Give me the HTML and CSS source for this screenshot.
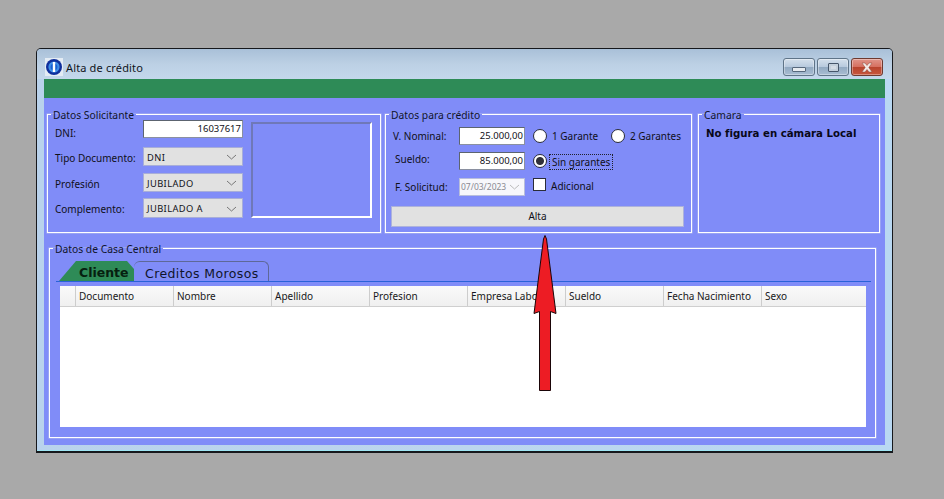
FILE: index.html
```html
<!DOCTYPE html>
<html lang="es">
<head>
<meta charset="utf-8">
<title>Alta de crédito</title>
<link rel="stylesheet" href="styles.css">
</head>
<body>
<div class="window">
  <div class="titlebar">
    <svg class="app-icon" width="18" height="18" viewBox="0 0 18 18">
      <rect width="18" height="18" fill="#e4ecf4"/>
      <circle cx="9" cy="9" r="8" fill="#0f2f9c"/>
      <circle cx="9" cy="9" r="5.6" fill="#3f8fe8"/>
      <path d="M9 4v10" stroke="#fff" stroke-width="2.4"/>
      <path d="M5.5 9a3.5 3.5 0 0 1 2-3.2v6.4a3.5 3.5 0 0 1-2-3.2zM12.5 9a3.5 3.5 0 0 0-2-3.2v6.4a3.5 3.5 0 0 0 2-3.2z" fill="#1b5fd0"/>
    </svg>
    <span class="title-text">Alta de crédito</span>
    <div class="win-buttons">
      <div class="win-btn"><span class="glyph-min"></span></div>
      <div class="win-btn"><span class="glyph-max"></span></div>
      <div class="win-btn win-close">
        <svg width="16" height="11" viewBox="0 0 16 11"><path d="M3 1h3l2 2.500L10 1h3L9.800 5.500 13 10h-3L8 7.500 6 10H3l3.200-4.500z" fill="#f4e9e6" stroke="#8a4a3c" stroke-width=".5"/></svg>
      </div>
    </div>
  </div>
  <div class="client">
    <div class="green-bar"></div>
    <div class="top-row">
      <fieldset class="group group-solicitante">
        <legend>Datos Solicitante</legend>
        <div class="solicitante-grid">
          <div class="label label-low">DNI:</div>
          <div class="field field-number">16037617</div>
          <div class="photo-box"></div>
          <div class="label">Tipo Documento:</div>
          <div class="combo"><span>DNI</span><svg class="chev" width="11" height="6" viewBox="0 0 11 6"><path d="M1 1l4.500 4L10 1" fill="none" stroke="#777" stroke-width="1"/></svg></div>
          <div class="label">Profesión</div>
          <div class="combo"><span>JUBILADO</span><svg class="chev" width="11" height="6" viewBox="0 0 11 6"><path d="M1 1l4.500 4L10 1" fill="none" stroke="#777" stroke-width="1"/></svg></div>
          <div class="label">Complemento:</div>
          <div class="combo combo-tall"><span>JUBILADO A</span><svg class="chev" width="11" height="6" viewBox="0 0 11 6"><path d="M1 1l4.500 4L10 1" fill="none" stroke="#777" stroke-width="1"/></svg></div>
        </div>
      </fieldset>
      <fieldset class="group group-credito">
        <legend>Datos para crédito</legend>
        <div class="credito-body">
          <div class="credito-grid">
            <div class="label label-mid">V. Nominal:</div>
            <div class="field field-number">25.000,00</div>
            <div class="options">
              <span class="radio"></span><span class="opt-text opt-one">1 Garante</span>
              <span class="radio"></span><span class="opt-text">2 Garantes</span>
            </div>
            <div class="label label-up label-in">Sueldo:</div>
            <div class="field field-number">85.000,00</div>
            <div class="options">
              <span class="radio radio-on"></span><span class="opt-text opt-focus">Sin garantes</span>
            </div>
            <div class="label label-mid label-in">F. Solicitud:</div>
            <div class="field field-date"><span>07/03/2023</span><svg class="chev" width="11" height="6" viewBox="0 0 11 6"><path d="M1 1l4.500 4L10 1" fill="none" stroke="#bbb" stroke-width="1"/></svg></div>
            <div class="options options-check">
              <span class="check"></span><span class="opt-text">Adicional</span>
            </div>
          </div>
          <div class="alta-btn">Alta</div>
        </div>
      </fieldset>
      <fieldset class="group group-camara">
        <legend>Camara</legend>
        <div class="camara-text">No figura en cámara Local</div>
      </fieldset>
    </div>
    <fieldset class="group group-central">
      <legend>Datos de Casa Central</legend>
      <div class="tabs">
        <div class="tab tab-active">Cliente</div>
        <div class="tab tab-other">Creditos Morosos</div>
      </div>
      <div class="table">
        <div class="thead">
          <div class="th th-first"></div>
          <div class="th">Documento</div>
          <div class="th">Nombre</div>
          <div class="th">Apellido</div>
          <div class="th">Profesion</div>
          <div class="th">Empresa Laboral</div>
          <div class="th">Sueldo</div>
          <div class="th">Fecha Nacimiento</div>
          <div class="th th-last">Sexo</div>
        </div>
      </div>
    </fieldset>
  </div>
  <svg class="arrow" width="26" height="158" viewBox="0 0 26 158">
    <path d="M13 .5L14.500 4 24 78.500 18.500 76.500V155.500H7.500V76.500L2 78.500 11.500 4z" fill="#ed1c24" stroke="#1a0508" stroke-width="1"/>
  </svg>
</div>
</body>
</html>
```

FILE: styles.css
```css
* { box-sizing: border-box; }
html, body { margin: 0; padding: 0; }
body {
  width: 944px;
  height: 499px;
  overflow: hidden;
  background: #a9a9a9;
  font-family: "Noto Sans", sans-serif;
  font-size: 10px;
  color: #101018;
}
.window {
  position: relative;
  width: 857px;
  height: 405px;
  margin: 48px 0 0 36px;
  border: 1px solid #16181c;
  border-bottom: 2px solid #16181c;
  border-radius: 5px 5px 0 0;
  background: linear-gradient(90deg, #b9d2ec 0, #bcd5ee 50%, #b9d8f2 100%);
  box-shadow: inset 0 -1px 0 #9fe6f4;
  padding: 0 7px 6px;
  display: flex;
  flex-direction: column;
}
.titlebar {
  height: 30px;
  flex: none;
  margin: 0 -7px;
  padding: 6px 9px 0 8px;
  display: flex;
  align-items: center;
  background: linear-gradient(180deg, #a9c0d8 0, #bcd0e4 50%, #c4d8ec 100%);
  border-radius: 4px 4px 0 0;
}
.app-icon { flex: none; }
.title-text { margin: 0 0 0 3px; font-size: 11px; letter-spacing: .15px; color: #10151c; }
.win-buttons { margin-left: auto; display: flex; gap: 2px; }
.win-btn {
  width: 32px;
  height: 18px;
  border: 1px solid #5f7488;
  border-radius: 3px;
  background: linear-gradient(180deg, #d4e0ec 0, #b8cade 48%, #92aac2 52%, #a8bdd2 100%);
  display: flex;
  align-items: center;
  justify-content: center;
  box-shadow: inset 0 0 0 1px rgba(255,255,255,.35);
}
.glyph-min { width: 14px; height: 5px; margin-top: 4px; background: #e6ebf0; border: 1px solid #56687c; border-radius: 1px; }
.glyph-max { width: 11px; height: 9px; border: 1px solid #46566a; border-radius: 1px; background: #d5dde6; box-shadow: inset 0 0 0 2px #c4d0dc; }
.win-close {
  border-color: #6e3a30;
  background: linear-gradient(180deg, #e0958a 0, #d67060 48%, #b8442e 52%, #c8563c 100%);
}
.client {
  flex: 1;
  background: #808cf8;
  display: flex;
  flex-direction: column;
}
.green-bar { height: 19px; flex: none; background: #2e8b57; }
.group {
  margin: 0;
  padding: 0;
  min-width: 0;
  border: 1px solid #fff;
  box-shadow: 0 0 0 .5px rgba(200,205,235,.7);
}
.group legend {
  margin-left: 3px;
  padding: 2px 2px 0;
  line-height: 12px;
  font-size: 10.300px;
  color: #10142c;
}
.top-row {
  flex: none;
  display: flex;
  margin: 9px 0 0 3px;
}
.group-solicitante { width: 334px; height: 126px; }
.group-credito { width: 307px; height: 126px; margin-left: 4px; }
.group-camara { width: 182px; height: 126px; margin-left: 6px; }
.solicitante-grid {
  display: grid;
  grid-template-columns: 88px 100px 120px;
  grid-template-rows: 27px 26px 25px 20px;
  margin-top: -1px;
  padding-left: 7px;
}
.photo-box {
  width: 121px;
  height: 96px;
  grid-column: 3;
  grid-row: 1 / span 4;
  margin: 2px 0 0 8px;
  border: 2px solid;
  border-color: #6f78b8 #fff #fff #6f78b8;
}
.label { padding-top: 4px; line-height: 14px; white-space: nowrap; }
.label-low { padding-top: 6px; }
.label-mid { padding-top: 2px; }
.label-up { padding-top: 0; }
.label-in { padding-left: 2px; }
.field {
  background: #fff;
  border: 1px solid #5c6470;
  border-right-color: #8a90a0;
  border-bottom-color: #8a90a0;
  height: 18px;
  line-height: 16px;
  padding: 0 1px;
  font-size: 9.500px;
}
.field-number { text-align: right; }
.combo {
  height: 19px;
  background: #e1e1e1;
  border: 1px solid #a8aed8;
  display: flex;
  align-items: center;
  justify-content: space-between;
  padding: 1px 5px 0 3px;
  font-size: 9.300px;
  letter-spacing: .4px;
}
.combo-tall { height: 20px; }
.chev { flex: none; }
.credito-body { margin-top: 6px; padding: 0 7px 0 5px; }
.credito-grid {
  display: grid;
  grid-template-columns: 66px 66px 1fr;
  grid-template-rows: 25px 26px 28px;
  padding-left: 2px;
}
.options { display: flex; align-items: flex-start; padding: 2px 0 0 8px; }
.options-check { padding-top: 0; }
.radio {
  width: 14px;
  height: 14px;
  flex: none;
  border-radius: 50%;
  background: #fff;
  border: 1px solid #2a2c38;
}
.radio-on { background: radial-gradient(circle, #30303a 0 3.500px, #fff 4.500px); }
.opt-text { margin-left: 5px; line-height: 14px; white-space: nowrap; }
.options-check .opt-text { margin-top: 1px; }
.opt-one { width: 59px; }
.opt-focus { outline: 1px dotted #20202c; padding: 0 2px; margin-left: 3px; margin-top: 1px; }
.check { width: 13px; height: 13px; flex: none; background: #fff; border: 1px solid #2a2c38; }
.field-date {
  background: #f7f7fb;
  border-color: #b8bedc;
  color: #8a8a92;
  font-size: 8.500px;
  display: flex;
  align-items: center;
  justify-content: space-between;
  padding: 0 4px 0 1px;
}
.alta-btn {
  height: 21px;
  background: #e1e1e1;
  border: 1px solid #adb2dc;
  text-align: center;
  line-height: 19px;
}
.camara-text {
  font-family: "DejaVu Sans", sans-serif;
  font-weight: 700;
  font-size: 10.200px;
  line-height: 14px;
  color: #080818;
  padding: 6px 0 0 7px;
}
.group-central {
  flex: none;
  width: 827px;
  height: 197px;
  margin: 8px 0 0 5px;
}
.tabs {
  display: flex;
  height: 21px;
  margin: 6px 4px 0 6px;
  border-bottom: 1px solid #2a62d8;
  padding-left: 3px;
}
.tab {
  height: 20px;
  line-height: 23px;
  white-space: nowrap;
  font-family: "DejaVu Sans", sans-serif;
  font-size: 12.500px;
}
.tab-active {
  width: 75px;
  padding-left: 20px;
  background: #2e8b57;
  font-weight: 700;
  color: #06200f;
  clip-path: polygon(0 100%, 17px 0, 68px 0, 75px 8px, 75px 100%);
}
.tab-other {
  width: 135px;
  padding-left: 11px;
  letter-spacing: .4px;
  color: #10142c;
  border: 1px solid #5e6898;
  border-bottom: 0;
  border-left: 0;
  border-radius: 6px 6px 0 0;
}
.table {
  height: 141px;
  margin: 4px 9px 0 10px;
  background: #fff;
}
.thead {
  display: grid;
  grid-template-columns: 16px repeat(7, 98px) 1fr;
  height: 21px;
  background: linear-gradient(180deg, #fafafa, #f0f0f0);
  border-bottom: 1px solid #cfcfcf;
}
.th {
  padding-left: 3px;
  line-height: 20px;
  border-right: 1px solid #cdcdcd;
  white-space: nowrap;
  overflow: hidden;
  color: #181820;
}
.th-last { border-right: 0; }
.arrow {
  position: absolute;
  left: 495px;
  top: 186px;
}
```
